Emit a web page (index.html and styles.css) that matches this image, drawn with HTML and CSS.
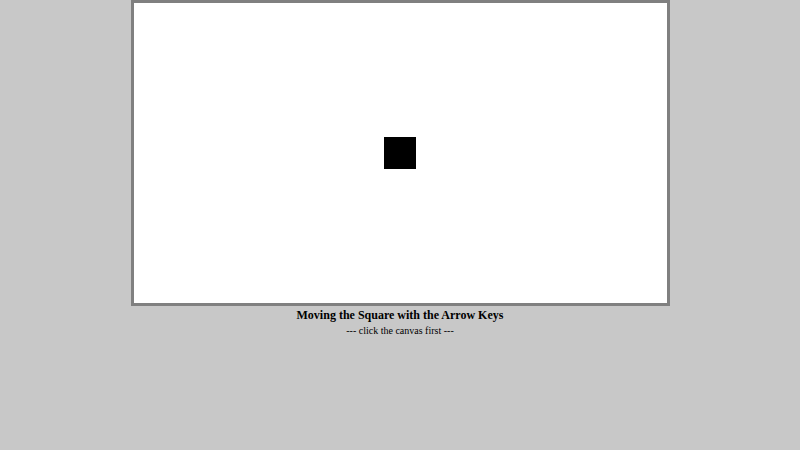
FILE: index.html
```html
<!DOCTYPE html>
<html>
<head>
<meta charset="utf-8">
<link rel="stylesheet" href="styles.css">
</head>
<body>
<div class="page">
  <div class="stage"><div class="square"></div></div>
  <div class="title">Moving the Square with the Arrow Keys</div>
  <div class="hint">--- click the canvas first ---</div>
</div>
</body>
</html>
```
FILE: styles.css
```css
html, body {
  margin: 0;
  padding: 0;
  background: #c8c8c8;
  font-family: "Liberation Serif", "Times New Roman", serif;
}
.page {
  display: flex;
  flex-direction: column;
  align-items: center;
}
.stage {
  width: 533px;
  height: 300px;
  border: 3px solid #808080;
  background: #ffffff;
  display: flex;
  align-items: center;
  justify-content: center;
}
.square {
  width: 32px;
  height: 32px;
  background: #000000;
}
.title {
  margin-top: 1px;
  font-weight: bold;
  font-size: 12px;
  line-height: 16px;
  color: #000;
}
.hint {
  font-size: 10px;
  line-height: 16px;
  color: #000;
}
```
